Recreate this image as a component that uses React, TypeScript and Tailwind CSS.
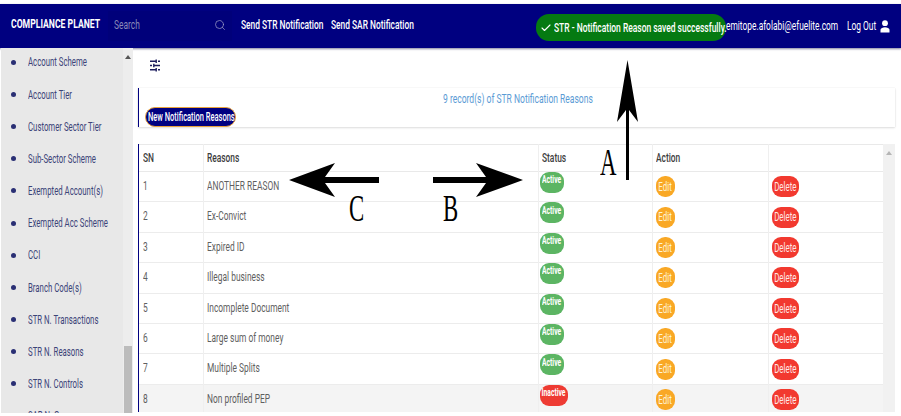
import { Check, Search } from 'lucide-react';

const menuItems = [
    'Account Scheme',
    'Account Tier',
    'Customer Sector Tier',
    'Sub-Sector Scheme',
    'Exempted Account(s)',
    'Exempted Acc Scheme',
    'CCI',
    'Branch Code(s)',
    'STR N. Transactions',
    'STR N. Reasons',
    'STR N. Controls',
    'SAR N. Groups',
];

const reasons = [
    { sn: 1, name: 'ANOTHER REASON', active: true },
    { sn: 2, name: 'Ex-Convict', active: true },
    { sn: 3, name: 'Expired ID', active: true },
    { sn: 4, name: 'Illegal business', active: true },
    { sn: 5, name: 'Incomplete Document', active: true },
    { sn: 6, name: 'Large sum of money', active: true },
    { sn: 7, name: 'Multiple Splits', active: true },
    { sn: 8, name: 'Non profiled PEP', active: false },
];

// the screenshot is squeezed sideways, so the text is narrowed to match
const narrow = 'inline-block origin-left scale-x-[0.645] whitespace-nowrap';
const narrowCenter = 'inline-block shrink-0 scale-x-[0.61] whitespace-nowrap';

export default function App() {
    return (
        <div className="relative h-[416px] w-[901px] overflow-hidden bg-white pt-1 pb-[3px] font-['Roboto',sans-serif]">
            <div className="flex h-full flex-col">
                {/* Top bar */}
                <header className="flex h-11 shrink-0 items-center bg-[#000080] text-[13px] text-white shadow-[0_1px_2px_rgba(0,0,60,0.5)]">
                    <div className="-mt-[5px] w-[108px] shrink-0 pl-[11px] font-bold">
                        <span className="inline-block origin-left scale-x-[0.665] whitespace-nowrap">COMPLIANCE PLANET</span>
                    </div>
                    <div className="flex h-[30px] w-[124px] shrink-0 items-center justify-between bg-[#00007a] pr-[6px] pb-[3px] pl-1.5 text-[#8a8ab8]">
                        <span className={narrow}>Search</span>
                        <Search size={12} strokeWidth={1.5} className="text-[#9a9ac4]" />
                    </div>
                    <div className="-mt-[2px] ml-[9px] w-[90px] shrink-0 font-medium">
                        <span className={narrow}>Send STR Notification</span>
                    </div>
                    <div className="-mt-[2px] w-[205px] shrink-0 font-medium">
                        <span className={narrow}>Send SAR Notification</span>
                    </div>
                    <div className="mt-[3px] flex h-[27px] w-[190px] shrink-0 items-center gap-[2px] rounded-[13px] bg-[#057a12] pl-1">
                        <Check size={12} strokeWidth={2.2} className="shrink-0" />
                        <span className="inline-block origin-left scale-x-[0.65] font-medium whitespace-nowrap">STR - Notification Reason saved successfully.</span>
                    </div>
                    <div className="w-[121px] shrink-0">
                        <span className={narrow}>emitope.afolabi@efuelite.com</span>
                    </div>
                    <div className="w-[33px] shrink-0">
                        <span className={narrow}>Log Out</span>
                    </div>
                    <svg width="10" height="13" viewBox="0 0 10 13" fill="white">
                        <circle cx="5" cy="3.2" r="2.9" />
                        <path d="M0.5 12.5 V9.8 C0.5 8 3 7.2 5 7.2 C7 7.2 9.5 8 9.5 9.8 V12.5 Z" />
                    </svg>
                </header>

                <div className="flex min-h-0 flex-1">
                    {/* Sidebar */}
                    <aside className="relative ml-px w-[132px] shrink-0 overflow-hidden bg-[#e8e8e8]">
                        <ul className="-mt-[2px]">
                            {menuItems.map((item) => (
                                <li key={item} className="flex h-[32.2px] items-center pl-[10px] text-[13px] text-[#3c4478]">
                                    <span className="mr-[12px] h-[5px] w-[5px] shrink-0 rounded-full bg-[#2a2f74]" />
                                    <span className="inline-block origin-left scale-x-[0.6] whitespace-nowrap">{item}</span>
                                </li>
                            ))}
                        </ul>
                        {/* Scrollbar */}
                        <div className="absolute top-0 right-0 bottom-0 w-[10px] bg-[#ededed]">
                            <div className="absolute top-[7px] left-[2px] h-0 w-0 border-x-[3px] border-b-[4px] border-x-transparent border-b-[#555]" />
                            <div className="absolute right-px bottom-0 left-px h-[67px] bg-[#bcbcbc]" />
                        </div>
                    </aside>

                    {/* Content */}
                    <main className="min-w-0 flex-1 pr-[6px] pl-[5px]">
                        <div className="flex h-[40px] items-center pb-[6px] pl-[12px]">
                            <svg width="10" height="13" viewBox="0 0 10 13" stroke="#1c1c5e" strokeWidth="1.4" fill="none">
                                <path d="M0 2.2 H5.5 M8 2.2 H10 M6.2 0.4 V4" />
                                <path d="M0 6.5 H2 M4.5 6.5 H10 M3.8 4.7 V8.3" />
                                <path d="M0 10.8 H5.5 M8 10.8 H10 M6.2 9 V12.6" />
                            </svg>
                        </div>
                        <section className="relative h-[39px] border-l-[1.5px] border-[#000080] shadow-[0_1px_2px_rgba(0,0,0,0.12),0_0_1px_rgba(0,0,0,0.12)]">
                            <p className="pt-[1px] pl-[304px] text-[13px] text-[#5b9bd5]">
                                <span className="inline-block origin-left scale-x-[0.655] whitespace-nowrap">9 record(s) of STR Notification Reasons</span>
                            </p>
                            <button className="absolute top-[19px] left-[6px] flex h-[20px] w-[91px] items-center rounded-[10px] border border-[#e8a23c] bg-[#000080] pl-[2px] text-[12px] font-medium text-white">
                                <span className="inline-block shrink-0 origin-left scale-x-[0.625] whitespace-nowrap">New Notification Reasons</span>
                            </button>
                        </section>

                        <section className="mt-[17px] flex h-[268px] overflow-hidden border-l-[1.5px] border-[#000080]">
                            <table className="h-fit w-[745px] table-fixed border-collapse text-[13px]">
                                <colgroup>
                                    <col className="w-[64px]" />
                                    <col className="w-[335px]" />
                                    <col className="w-[114px]" />
                                    <col className="w-[116px]" />
                                    <col />
                                </colgroup>
                                <thead>
                                    <tr className="h-[27px] border-y border-[#e9e9e9] text-left text-[#3d3d3d]">
                                        <th className="pl-[4px] font-medium"><span className={narrow}>SN</span></th>
                                        <th className="border-l border-[#efefef] pl-[3px] font-medium"><span className={narrow}>Reasons</span></th>
                                        <th className="border-l border-[#efefef] pl-[3px] font-medium"><span className={narrow}>Status</span></th>
                                        <th className="border-l border-[#efefef] pl-[3px] font-medium"><span className={narrow}>Action</span></th>
                                        <th className="border-l border-[#efefef]" />
                                    </tr>
                                </thead>
                                <tbody className="text-[#5f5f5f]">
                                    {reasons.map((row) => (
                                        <tr key={row.sn} className={`h-[30.4px] border-b border-[#ececec] ${row.active ? '' : 'bg-[#f4f4f4]'}`}>
                                            <td className="pb-[2px] pl-[4px]"><span className={narrow}>{row.sn}</span></td>
                                            <td className="border-l border-[#efefef] pb-[2px] pl-[3px]"><span className={narrow}>{row.name}</span></td>
                                            <td className="border-l border-[#efefef] pl-[1px] align-top">
                                                <span className={`flex h-[21px] items-center justify-center rounded-[9px] pb-[4px] text-[11px] font-bold text-white ${row.active ? 'w-[24px] bg-[#5cb563]' : 'w-[28px] bg-[#ee3b33]'}`}>
                                                    <span className={narrowCenter}>{row.active ? 'Active' : 'Inactive'}</span>
                                                </span>
                                            </td>
                                            <td className="border-l border-[#efefef] pl-[3px]">
                                                <span className="flex h-[21px] w-[19px] items-center justify-center rounded-[9px] bg-[#f9a825] text-[#fff3d6]">
                                                    <span className={narrowCenter}>Edit</span>
                                                </span>
                                            </td>
                                            <td className="border-l border-[#efefef] pl-[3px]">
                                                <span className="flex h-[21px] w-[27px] items-center justify-center rounded-[9px] bg-[#f2392f] text-[#ffe6e4]">
                                                    <span className={narrowCenter}>Delete</span>
                                                </span>
                                            </td>
                                        </tr>
                                    ))}
                                </tbody>
                            </table>
                            <div className="relative w-[12px] bg-[#f1f1f1]">
                                <div className="absolute top-[7px] left-[3px] h-0 w-0 border-x-[3px] border-b-[4px] border-x-transparent border-b-[#b5b5b5]" />
                            </div>
                        </section>
                    </main>
                </div>
            </div>

            {/* Annotations drawn on top of the screenshot */}
            <svg className="absolute inset-0" width="901" height="416" viewBox="0 0 901 416">
                <path d="M289 180 L335 163 L325 177 L379 177 L379 183 L325 183 L335 197 Z" fill="#000" />
                <path d="M523 180 L476 163 L486 177 L433 177 L433 183 L486 183 L476 197 Z" fill="#000" />
                <path d="M627.5 60 L638 122 L629 110 L629 180 L626 180 L626 110 L617 122 Z" fill="#000" />
            </svg>
            <span className="absolute top-[143px] left-[600px] origin-left scale-x-[0.6] font-['Liberation_Serif',serif] text-[38px] leading-[38px] text-black">A</span>
            <span className="absolute top-[189px] left-[443px] origin-left scale-x-[0.6] font-['Liberation_Serif',serif] text-[38px] leading-[38px] text-black">B</span>
            <span className="absolute top-[189px] left-[349px] origin-left scale-x-[0.6] font-['Liberation_Serif',serif] text-[38px] leading-[38px] text-black">C</span>
        </div>
    );
}
